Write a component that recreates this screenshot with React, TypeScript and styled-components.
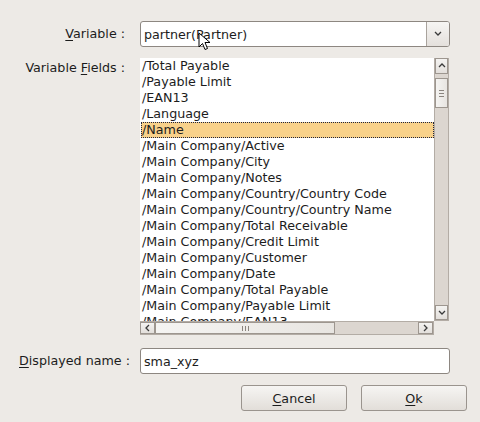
import React from "react";
import styled, { createGlobalStyle } from "styled-components";

const Global = createGlobalStyle`
    html, body {
        margin: 0;
        padding: 0;
        background: #edeae6;
    }
    body {
        font-family: "DejaVu Sans", "Liberation Sans", sans-serif;
        font-size: 12.7px;
        color: #1c1c1c;
    }
`;

const Dialog = styled.div`
    width: 480px;
    height: 422px;
    box-sizing: border-box;
    padding-top: 21px;
    display: flex;
    flex-direction: column;
    background: #edeae6;
    overflow: hidden;
`;
const Row = styled.div<{ $top?: number; $align?: string }>`
    display: grid;
    grid-template-columns: 140px 310px;
    align-items: ${p => p.$align || "center"};
    margin-top: ${p => p.$top || 0}px;
`;
const Label = styled.label<{ $left?: boolean; $pad?: number }>`
    text-align: ${p => (p.$left ? "left" : "right")};
    padding-right: ${p => (p.$left ? 0 : 15)}px;
    padding-left: ${p => (p.$left ? 19 : 0)}px;
    padding-top: ${p => p.$pad || 0}px;
    white-space: nowrap;
    line-height: 16px;
`;
const U = styled.span`
    text-decoration: underline;
    text-underline-offset: 2px;
`;
const Combo = styled.div`
    position: relative;
    height: 26px;
    box-sizing: border-box;
    border: 1px solid #8d8781;
    border-radius: 3px;
    background: #fff;
    display: flex;
    align-items: stretch;
    overflow: visible;
`;
const ComboText = styled.div`
    flex: 1;
    padding-left: 3px;
    display: flex;
    align-items: center;
`;
const ComboButton = styled.div`
    width: 22px;
    border-left: 1px solid #a9a39d;
    background: linear-gradient(#f6f5f3, #e4e0dc);
    border-radius: 0 2px 2px 0;
    display: flex;
    align-items: center;
    justify-content: center;
`;
const Cursor = styled.svg`
    position: absolute;
    left: 57px;
    top: 10px;
`;
const ListBox = styled.div`
    display: grid;
    grid-template-columns: 294px 16px;
    grid-template-rows: 263px 14px;
`;
const Rows = styled.div`
    background: #fff;
    overflow: hidden;
    padding-left: 1px;
`;
const Item = styled.div<{ $sel?: boolean }>`
    height: 16px;
    line-height: 16px;
    padding-left: 1px;
    white-space: nowrap;
    box-sizing: border-box;
    background: ${p => (p.$sel ? "#f8d18a" : "transparent")};
    outline: ${p => (p.$sel ? "1px dotted #1f2440" : "none")};
    outline-offset: -1px;
`;
const VScroll = styled.div`
    background: #dcd6d0;
    border: 1px solid #b3aca5;
    border-top: none;
    box-sizing: border-box;
    display: flex;
    flex-direction: column;
    justify-content: space-between;
    width: 15px;
`;
const HScroll = styled.div`
    background: #dcd6d0;
    border: 1px solid #b3aca5;
    border-left: none;
    box-sizing: border-box;
    display: flex;
    align-items: stretch;
`;
const SBtn = styled.div<{ $w?: number; $h?: number }>`
    width: ${p => (p.$w ? p.$w + "px" : "auto")};
    height: ${p => (p.$h ? p.$h + "px" : "auto")};
    box-sizing: border-box;
    border: 1px solid #9d968f;
    background: linear-gradient(#f4f3f1, #e3dfdb);
    display: flex;
    align-items: center;
    justify-content: center;
    flex-shrink: 0;
`;
const Thumb = styled(SBtn)`
    background: linear-gradient(90deg, #f5f4f2, #e8e5e1);
`;
const Input = styled.div`
    height: 26px;
    box-sizing: border-box;
    border: 1px solid #8d8781;
    border-radius: 3px;
    background: #fff;
    padding-left: 3px;
    display: flex;
    align-items: center;
`;
const Buttons = styled.div`
    display: flex;
    justify-content: flex-end;
    gap: 14px;
    padding-right: 13px;
    margin-top: 11px;
`;
const Button = styled.button`
    width: 106px;
    height: 26px;
    border: 1px solid #9a948e;
    border-radius: 3px;
    background: linear-gradient(#f6f5f3, #e2ded9);
    font: inherit;
    color: #1c1c1c;
    padding: 0;
`;

const Chevron = ({ dir }: { dir: "up" | "down" | "left" | "right" }) => {
    const d = {
        up: "M1 5 L4 2 L7 5",
        down: "M1 2 L4 5 L7 2",
        left: "M5 1 L2 4 L5 7",
        right: "M2 1 L5 4 L2 7",
    }[dir];
    return (
        <svg width="8" height="8" viewBox="0 0 8 8">
            <path d={d} fill="none" stroke="#3a3a3a" strokeWidth="1.3" />
        </svg>
    );
};

const fields = [
    "/Total Payable",
    "/Payable Limit",
    "/EAN13",
    "/Language",
    "/Name",
    "/Main Company/Active",
    "/Main Company/City",
    "/Main Company/Notes",
    "/Main Company/Country/Country Code",
    "/Main Company/Country/Country Name",
    "/Main Company/Total Receivable",
    "/Main Company/Credit Limit",
    "/Main Company/Customer",
    "/Main Company/Date",
    "/Main Company/Total Payable",
    "/Main Company/Payable Limit",
    "/Main Company/EAN13",
];

export default () => (
    <Dialog>
        <Global />
        <Row>
            <Label><U>V</U>ariable :</Label>
            <Combo>
                <ComboText>partner(Partner)</ComboText>
                <ComboButton><Chevron dir="down" /></ComboButton>
                <Cursor width="14" height="20" viewBox="0 0 14 20">
                    <path d="M1 1 L1 15 L4.5 11.5 L7 17.5 L9.5 16.5 L7 10.5 L12 10.5 Z" fill="#fff" stroke="#000" strokeWidth="1" strokeLinejoin="round" />
                </Cursor>
            </Combo>
        </Row>
        <Row $top={11} $align="start">
            <Label $pad={2}>Variable <U>F</U>ields :</Label>
            <ListBox>
                <Rows>
                    {fields.map(f => (
                        <Item key={f} $sel={f === "/Name"}>{f}</Item>
                    ))}
                </Rows>
                <VScroll>
                    <div>
                        <SBtn $h={16}><Chevron dir="up" /></SBtn>
                        <Thumb $h={30} style={{ marginTop: 4 }}>
                            <svg width="7" height="9" viewBox="0 0 7 9">
                                <path d="M1 1.5 H6 M1 4.5 H6 M1 7.5 H6" stroke="#8a847e" />
                            </svg>
                        </Thumb>
                    </div>
                    <SBtn $h={15}><Chevron dir="down" /></SBtn>
                </VScroll>
                <HScroll>
                    <SBtn $w={15}><Chevron dir="left" /></SBtn>
                    <Thumb $w={180}>
                        <svg width="9" height="7" viewBox="0 0 9 7">
                            <path d="M1.5 1 V6 M4.5 1 V6 M7.5 1 V6" stroke="#8a847e" />
                        </svg>
                    </Thumb>
                    <div style={{ flex: 1 }} />
                    <SBtn $w={15}><Chevron dir="right" /></SBtn>
                </HScroll>
                <div />
            </ListBox>
        </Row>
        <Row $top={13}>
            <Label $left><U>D</U>isplayed name :</Label>
            <Input>sma_xyz</Input>
        </Row>
        <Buttons>
            <Button><U>C</U>ancel</Button>
            <Button><U>O</U>k</Button>
        </Buttons>
    </Dialog>
);
